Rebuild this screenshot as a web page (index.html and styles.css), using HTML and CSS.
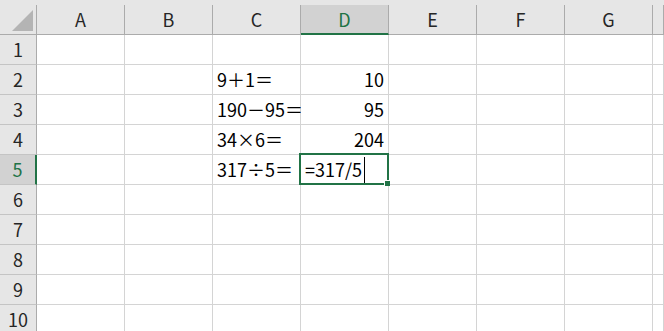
FILE: index.html
```html
<!DOCTYPE html>
<html lang="ja">

<head>
    <meta charset="UTF-8">
    <meta name="viewport" content="width=device-width, initial-scale=1.0">
    <title>Sheet1</title>
    <link rel="stylesheet" href="styles.css">
</head>

<body>
    <div class="sheet">
        <!-- column headers -->
        <div class="corner"><div class="corner-mark"></div></div>
        <div class="col-head">A</div>
        <div class="col-head">B</div>
        <div class="col-head">C</div>
        <div class="col-head active">D</div>
        <div class="col-head">E</div>
        <div class="col-head">F</div>
        <div class="col-head">G</div>
        <div class="col-head"></div>

        <div class="row-head">1</div>
        <div class="cell"></div><div class="cell"></div><div class="cell"></div><div class="cell"></div>
        <div class="cell"></div><div class="cell"></div><div class="cell"></div><div class="cell"></div>

        <div class="row-head">2</div>
        <div class="cell"></div><div class="cell"></div><div class="cell">9＋1＝</div><div class="cell num">10</div>
        <div class="cell"></div><div class="cell"></div><div class="cell"></div><div class="cell"></div>

        <div class="row-head">3</div>
        <div class="cell"></div><div class="cell"></div><div class="cell">190－95＝</div><div class="cell num">95</div>
        <div class="cell"></div><div class="cell"></div><div class="cell"></div><div class="cell"></div>

        <div class="row-head">4</div>
        <div class="cell"></div><div class="cell"></div><div class="cell">34×6＝</div><div class="cell num">204</div>
        <div class="cell"></div><div class="cell"></div><div class="cell"></div><div class="cell"></div>

        <div class="row-head active">5</div>
        <div class="cell"></div><div class="cell"></div><div class="cell">317÷5＝</div>
        <div class="cell editing">=317/5<span class="caret"></span><div class="selection"><div class="fill-handle"></div></div></div>
        <div class="cell"></div><div class="cell"></div><div class="cell"></div><div class="cell"></div>

        <div class="row-head">6</div>
        <div class="cell"></div><div class="cell"></div><div class="cell"></div><div class="cell"></div>
        <div class="cell"></div><div class="cell"></div><div class="cell"></div><div class="cell"></div>

        <div class="row-head">7</div>
        <div class="cell"></div><div class="cell"></div><div class="cell"></div><div class="cell"></div>
        <div class="cell"></div><div class="cell"></div><div class="cell"></div><div class="cell"></div>

        <div class="row-head">8</div>
        <div class="cell"></div><div class="cell"></div><div class="cell"></div><div class="cell"></div>
        <div class="cell"></div><div class="cell"></div><div class="cell"></div><div class="cell"></div>

        <div class="row-head">9</div>
        <div class="cell"></div><div class="cell"></div><div class="cell"></div><div class="cell"></div>
        <div class="cell"></div><div class="cell"></div><div class="cell"></div><div class="cell"></div>

        <div class="row-head">10</div>
        <div class="cell"></div><div class="cell"></div><div class="cell"></div><div class="cell"></div>
        <div class="cell"></div><div class="cell"></div><div class="cell"></div><div class="cell"></div>
    </div>
</body>

</html>
```

FILE: styles.css
```css
html,
body {
    margin: 0;
    height: 100%;
    overflow: hidden;
    background: #ffffff;
}

body {
    font-family: "Noto Sans CJK JP", "Noto Sans", sans-serif;
    font-size: 18px;
    color: #000000;
}

.sheet {
    display: grid;
    grid-template-columns: 37px repeat(7, 88px) 1fr;
    grid-template-rows: 30px repeat(10, 30px);
    padding-top: 5px;
    background: #e6e6e6;
}

.sheet > div {
    box-sizing: border-box;
}

.corner {
    display: flex;
    justify-content: flex-end;
    align-items: flex-end;
    padding: 0 3px 3px 0;
    border-right: 1px solid #ababab;
    border-bottom: 1px solid #ababab;
}

.corner-mark {
    width: 21px;
    height: 21px;
    background: #b4b4b4;
    clip-path: polygon(100% 0, 100% 100%, 0 100%);
}

.col-head {
    text-align: center;
    line-height: 29px;
    color: #262626;
    border-right: 1px solid #ababab;
    border-bottom: 1px solid #ababab;
}

.col-head.active {
    background: #d2d2d2;
    color: #217346;
    border-bottom: 2px solid #217346;
}

.row-head {
    text-align: center;
    line-height: 29px;
    color: #262626;
    border-right: 1px solid #ababab;
    border-bottom: 1px solid #c4c4c4;
}

.row-head.active {
    background: #d2d2d2;
    color: #217346;
    border-right: 2px solid #217346;
}

.cell {
    background: #ffffff;
    padding: 0 4px;
    line-height: 29px;
    white-space: nowrap;
    border-right: 1px solid #d4d4d4;
    border-bottom: 1px solid #d4d4d4;
}

.num {
    text-align: right;
}

.editing {
    position: relative;
}

.caret {
    display: inline-block;
    width: 1px;
    height: 27px;
    margin-left: 2px;
    vertical-align: -7px;
    background: #000000;
}

.selection {
    position: absolute;
    top: -2px;
    left: -2px;
    right: -1px;
    bottom: -1px;
    border: 2px solid #217346;
}

.fill-handle {
    position: absolute;
    right: -3px;
    bottom: -3px;
    width: 5px;
    height: 5px;
    background: #217346;
    border-left: 1px solid #ffffff;
    border-top: 1px solid #ffffff;
}
```
